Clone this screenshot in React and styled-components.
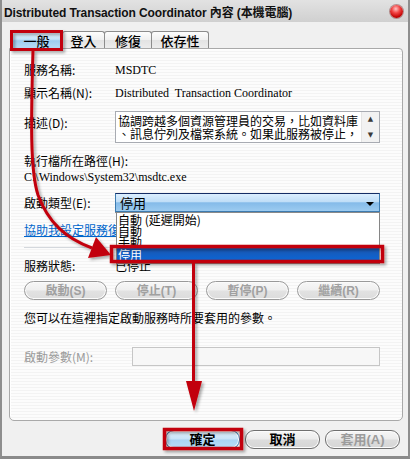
import React from "react";
import { styled, createGlobalStyle } from "styled-components";

const GlobalStyle = createGlobalStyle`
  html, body {
    margin: 0;
    padding: 0;
    background: #ffffff;
  }
  body {
    font-family: "Liberation Serif", "Noto Sans CJK TC", serif;
    color: #000;
  }
`;

const tabs = [
  { label: "一般", width: 53, active: true },
  { label: "登入", width: 43 },
  { label: "修復", width: 48 },
  { label: "依存性", width: 58 },
];

const startTypes = ["自動 (延遲開始)", "自動", "手動", "停用"];

const App = () => {
  return (
    <Page>
      <GlobalStyle />
      <Window>
        <TitleBar>
          <Title>Distributed Transaction Coordinator 內容 (本機電腦)</Title>
          <CloseBall />
        </TitleBar>

        <Body>
          <TabRow>
            {tabs.map((t) => (
              <Tab key={t.label} $width={t.width} $active={t.active}>
                {t.label}
              </Tab>
            ))}
          </TabRow>

          <Panel>
            <Row $mt={0}>
              <Label>服務名稱:</Label>
              <Value>MSDTC</Value>
            </Row>
            <Row $mt={7}>
              <Label>顯示名稱(N):</Label>
              <Value>Distributed&nbsp; Transaction Coordinator</Value>
            </Row>
            <Row $mt={10} $align="start">
              <Label $pt={4}>描述(D):</Label>
              <TextArea>
                <TextAreaText>
                  協調跨越多個資源管理員的交易，比如資料庫
                  <br />
                  、訊息佇列及檔案系統。如果此服務被停止，
                </TextAreaText>
                <ScrollBar>
                  <ScrollArrow>▲</ScrollArrow>
                  <ScrollArrow>▼</ScrollArrow>
                </ScrollBar>
              </TextArea>
            </Row>
            <Line $mt={10}>執行檔所在路徑(H):</Line>
            <Line $mt={0}>
              <Value>C:\Windows\System32\msdtc.exe</Value>
            </Line>
            <Row $mt={8}>
              <Label>啟動類型(E):</Label>
              <Combo>
                <ComboBox>
                  <span>停用</span>
                  <ComboArrow />
                </ComboBox>
                <DropList>
                  {startTypes.map((s) => (
                    <DropItem key={s} $selected={s === "停用"}>
                      {s}
                    </DropItem>
                  ))}
                </DropList>
              </Combo>
            </Row>
            <Link $mt={10}>協助我設定服務復原選項。</Link>
            <Separator />
            <Row $mt={10}>
              <Label>服務狀態:</Label>
              <Label>已停止</Label>
            </Row>
            <ButtonRow>
              <PillButton disabled>啟動(S)</PillButton>
              <PillButton disabled>停止(T)</PillButton>
              <PillButton disabled>暫停(P)</PillButton>
              <PillButton disabled>繼續(R)</PillButton>
            </ButtonRow>
            <Line $mt={10}>您可以在這裡指定啟動服務時所要套用的參數。</Line>
            <Row $mt={21} $label={108}>
              <Label $muted>啟動參數(M):</Label>
              <Input />
            </Row>
          </Panel>

          <Footer>
            <DialogButton $default>確定</DialogButton>
            <DialogButton>取消</DialogButton>
            <DialogButton disabled>套用(A)</DialogButton>
          </Footer>
        </Body>
      </Window>

      <Annotations viewBox="0 0 410 459" width="410" height="459">
        <defs>
          <filter id="shadow" x="-20%" y="-20%" width="140%" height="140%">
            <feDropShadow dx="2" dy="2" stdDeviation="1.4" floodColor="#000" floodOpacity="0.35" />
          </filter>
        </defs>
        <g filter="url(#shadow)" stroke="#c2000b" fill="none">
          <rect x="11.5" y="31.5" width="50" height="18" strokeWidth="3" />
          <path d="M33 50 C 31 120, 30 170, 38 195 C 48 222, 65 238, 92 248" strokeWidth="3" />
          <polygon points="111,255 88,258 96,237" fill="#c2000b" stroke="none" />
          <rect x="111.5" y="246.5" width="271" height="15" strokeWidth="3.5" />
          <path d="M193.5 263 L193.5 384" strokeWidth="3" />
          <polygon points="186,381 202,381 194,411" fill="#c2000b" stroke="none" />
          <rect x="164.5" y="429.5" width="77" height="19" strokeWidth="3.5" />
        </g>
      </Annotations>
    </Page>
  );
};

export default App;

const Page = styled.div`
  position: relative;
  width: 410px;
  height: 459px;
  overflow: hidden;
`;

const Window = styled.div`
  box-sizing: border-box;
  width: 410px;
  height: 459px;
  display: flex;
  flex-direction: column;
  background: #f0f0f0;
  border-left: 2px solid #8e8e8e;
  border-right: 2px solid #8e8e8e;
  border-bottom: 3px solid #8a8a8a;
`;

const TitleBar = styled.div`
  height: 22px;
  flex: none;
  display: flex;
  align-items: center;
  justify-content: space-between;
  padding: 0 5px 0 2px;
  background: linear-gradient(#e2e2e2, #d0d0d0);
`;

const Title = styled.div`
  font-family: "Liberation Sans", "Noto Sans CJK TC", sans-serif;
  font-size: 12px;
  font-weight: bold;
  color: #111;
  white-space: nowrap;
  letter-spacing: -0.1px;
`;

const CloseBall = styled.div`
  width: 13px;
  height: 13px;
  border-radius: 50%;
  background: radial-gradient(circle at 45% 30%, #ffc4c4 0, #f24545 35%, #c00000 72%, #7c0000 100%);
  box-shadow: 0 0 0 1px rgba(120, 20, 20, 0.4);
`;

const Body = styled.div`
  flex: 1;
  display: flex;
  flex-direction: column;
  padding: 9px 5px 0 7px;
`;

const TabRow = styled.div`
  display: flex;
  height: 17px;
  padding-left: 1px;
`;

const Tab = styled.div`
  box-sizing: border-box;
  width: ${(p) => p.$width}px;
  height: 17px;
  margin-right: -1px;
  border: 1px solid #8c8c8c;
  border-bottom: none;
  border-radius: 3px 3px 0 0;
  display: flex;
  align-items: center;
  justify-content: center;
  font-family: "Noto Sans CJK TC", sans-serif;
  font-size: 13px;
  font-weight: 500;
  line-height: 1;
  background: ${(p) =>
    p.$active
      ? "linear-gradient(#e8f5fd 0%, #c4e4f9 45%, #9dcdf0 55%, #b7dcf5 100%)"
      : "linear-gradient(#fdfdfd 0%, #f0f0f0 50%, #e3e3e3 51%, #ececec 100%)"};
`;

const Panel = styled.div`
  box-sizing: border-box;
  height: 373px;
  border: 1px solid #a9a9a9;
  border-radius: 0 4px 5px 5px;
  padding: 13px 22px 0 14px;
  background: repeating-linear-gradient(180deg, #fcfcfc 0 2px, #f3f3f3 2px 3px);
  box-shadow: inset 1px 1px 0 #ffffff;
  font-size: 12px;
`;

const Row = styled.div`
  display: grid;
  grid-template-columns: ${(p) => p.$label ?? 91}px 1fr;
  align-items: ${(p) => p.$align || "center"};
  margin-top: ${(p) => p.$mt || 0}px;
  line-height: 16px;
`;

const Label = styled.div`
  font-family: "Noto Sans CJK TC", sans-serif;
  font-size: 12px;
  line-height: 16px;
  padding-top: ${(p) => p.$pt || 0}px;
  color: ${(p) => (p.$muted ? "#9a9a9a" : "#000")};
  white-space: nowrap;
`;

const Value = styled.div`
  font-family: "Liberation Serif", serif;
  font-size: 12px;
  line-height: 16px;
  white-space: nowrap;
`;

const Line = styled.div`
  font-family: "Noto Sans CJK TC", sans-serif;
  font-size: 12px;
  line-height: 16px;
  margin-top: ${(p) => p.$mt || 0}px;
  white-space: nowrap;
`;

const TextArea = styled.div`
  box-sizing: border-box;
  height: 32px;
  display: flex;
  border: 1px solid #a8abb2;
  background: #ffffff;
`;

const TextAreaText = styled.div`
  flex: 1;
  padding: 2px 0 0 2px;
  font-family: "Noto Sans CJK TC", sans-serif;
  font-size: 12px;
  line-height: 13px;
  white-space: nowrap;
  overflow: hidden;
`;

const ScrollBar = styled.div`
  width: 17px;
  display: flex;
  flex-direction: column;
  justify-content: space-between;
  background: #f2f2f2;
  border-left: 1px solid #e4e4e4;
`;

const ScrollArrow = styled.div`
  height: 14px;
  display: flex;
  align-items: center;
  justify-content: center;
  font-family: "DejaVu Sans", sans-serif;
  font-size: 7px;
  color: #3a3a3a;
`;

const Combo = styled.div`
  position: relative;
`;

const ComboBox = styled.div`
  box-sizing: border-box;
  height: 19px;
  display: flex;
  align-items: center;
  justify-content: space-between;
  padding: 0 5px 0 4px;
  border: 1px solid #3d7bb0;
  border-top-color: #162e66;
  background: linear-gradient(#dcefff 0%, #c0def7 45%, #85bbe9 52%, #9ccbf0 100%);
  font-family: "Noto Sans CJK TC", sans-serif;
  font-size: 13px;
  box-shadow: 0 1px 0 #8a8a8a;
`;

const ComboArrow = styled.div`
  width: 0;
  height: 0;
  border-left: 4px solid transparent;
  border-right: 4px solid transparent;
  border-top: 4px solid #000;
  margin-top: 2px;
`;

const DropList = styled.div`
  position: absolute;
  z-index: 2;
  top: 20px;
  left: 1px;
  right: 0;
  box-sizing: border-box;
  height: 51px;
  background: #ffffff;
  border: 1px solid #868686;
  border-top: none;
  padding-top: 1px;
`;

const DropItem = styled.div`
  height: ${(p) => (p.$selected ? 13 : 11)}px;
  margin-top: ${(p) => (p.$selected ? 1 : 0)}px;
  padding-left: 1px;
  font-family: "Noto Sans CJK TC", sans-serif;
  font-size: 12px;
  line-height: ${(p) => (p.$selected ? 13 : 11)}px;
  color: ${(p) => (p.$selected ? "#ffffff" : "#000")};
  background: ${(p) => (p.$selected ? "linear-gradient(#1b56b0, #0b66d6)" : "transparent")};
  white-space: nowrap;
`;

const Link = styled.div`
  margin-top: ${(p) => p.$mt || 0}px;
  font-family: "Noto Sans CJK TC", sans-serif;
  font-size: 12px;
  line-height: 16px;
  color: #0066cc;
  text-decoration: underline;
  white-space: nowrap;
`;

const Separator = styled.div`
  height: 1px;
  margin-top: 9px;
  background: #d4d8dd;
`;

const ButtonRow = styled.div`
  display: flex;
  justify-content: space-between;
  margin-top: 7px;
`;

const PillButton = styled.button`
  box-sizing: border-box;
  width: 83px;
  height: 19px;
  padding: 0;
  border: 1px solid #9a9a9a;
  border-radius: 10px;
  background: linear-gradient(#f7f7f7 0%, #efefef 48%, #e2e2e2 52%, #dcdcdc 100%);
  box-shadow: inset 0 0 0 1px #fbfbfb;
  font-family: "Liberation Sans", "Noto Sans CJK TC", sans-serif;
  font-size: 12px;
  font-weight: bold;
  color: #a0a0a0;
  line-height: 1;
`;

const Input = styled.div`
  box-sizing: border-box;
  height: 19px;
  border: 1px solid #c6c6c6;
  background: #f7f7f7;
`;

const Footer = styled.div`
  display: flex;
  justify-content: flex-end;
  gap: 5px;
  margin-top: 9px;
  padding-right: 3px;
`;

const DialogButton = styled.button`
  box-sizing: border-box;
  width: 75px;
  height: 19px;
  padding: 0;
  border: 1px solid ${(p) => (p.$default ? "#3c7fb1" : "#707070")};
  border-radius: 9px;
  background: ${(p) =>
    p.$default
      ? "linear-gradient(#e3f2fc 0%, #c7e3f8 48%, #a9d4f3 52%, #b9ddf6 100%)"
      : "linear-gradient(#f6f6f6 0%, #ececec 48%, #dcdcdc 52%, #d6d6d6 100%)"};
  box-shadow: inset 0 0 0 1px #fcfcfc;
  font-family: "Liberation Sans", "Noto Sans CJK TC", sans-serif;
  font-size: 13px;
  font-weight: bold;
  color: ${(p) => (p.disabled ? "#9c9c9c" : "#000")};
  line-height: 1;
`;

const Annotations = styled.svg`
  position: absolute;
  top: 0;
  left: 0;
  pointer-events: none;
  z-index: 5;
`;
